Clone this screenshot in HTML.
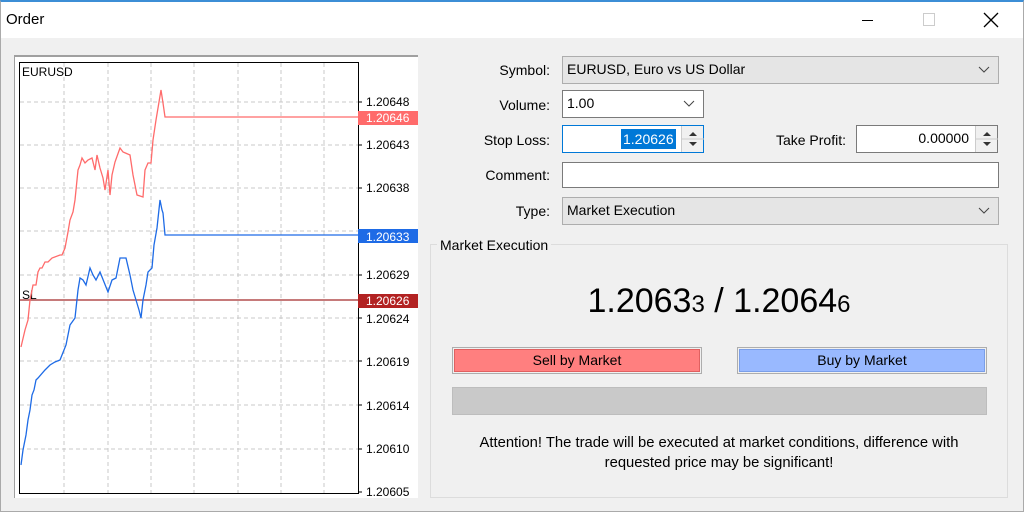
<!DOCTYPE html>
<html><head><meta charset="utf-8"><style>
*{margin:0;padding:0;box-sizing:border-box}
body{width:1024px;height:512px;background:#f0f0f0;font-family:"Liberation Sans",sans-serif;font-size:14px;color:#000;position:relative;overflow:hidden}
.abs{position:absolute}
.lbl{position:absolute;text-align:right;font-size:14px}
.box{position:absolute;border:1px solid #7a7a7a;background:#fff;font-size:14px;padding-left:4px;line-height:25px}
.sel{background:#e5e5e5;border-color:#adadad}
.chev{position:absolute;right:8px;top:0}
</style></head><body>
<div class="abs" style="left:0;top:0;width:1024px;height:512px;border:1px solid #aaa;border-top:2px solid #3c8ed6"></div>
<div class="abs" style="left:1px;top:2px;width:1022px;height:36px;background:#fff"></div>
<div class="abs" style="left:6px;top:11px;font-size:15px">Order</div>
<div class="abs" style="left:862px;top:20px;width:11px;height:1px;background:#000"></div>
<div class="abs" style="left:923px;top:13px;width:12px;height:13px;border:1px solid #ccc"></div>
<svg class="abs" style="left:983px;top:12px" width="16" height="16"><path d="M1 1L15 15M15 1L1 15" stroke="#000" stroke-width="1.3"/></svg>

<div class="abs" style="left:14px;top:55px;width:404px;height:443px;background:#fff;border-top:2px solid #a0a0a0;border-left:1px solid #a0a0a0"></div>
<svg class="abs" style="left:0;top:0" width="420" height="512" font-family="Liberation Sans" font-size="12">
<rect x="19.5" y="62.5" width="339" height="431" fill="#fff" stroke="#000"/>
<g stroke="#c8c8c8" stroke-dasharray="4,3">
<path d="M64 63V493M108 63V493M151 63V493M194 63V493M238 63V493M281 63V493M324 63V493"/>
<path d="M20 102H358M20 145H358M20 188H358M20 231H358M20 275H358M20 318H358M20 361H358M20 405H358M20 449H358"/>
</g>
<g stroke="#000"><path d="M358 102h4M358 145h4M358 188h4M358 275h4M358 318h4M358 361h4M358 405h4M358 449h4M358 492h4"/></g>
<text x="22" y="76">EURUSD</text>
<g fill="#000">
<text x="366" y="106">1.20648</text><text x="366" y="149">1.20643</text><text x="366" y="192">1.20638</text>
<text x="366" y="279">1.20629</text><text x="366" y="323">1.20624</text><text x="366" y="366">1.20619</text>
<text x="366" y="410">1.20614</text><text x="366" y="453">1.20610</text><text x="366" y="496">1.20605</text>
</g>
<path d="M20 300H358" stroke="#a52a2a" stroke-width="1.3"/>
<text x="22" y="299">SL</text>
<polyline fill="none" stroke="#ff6b6b" stroke-width="1.3" points="21,347 25,330 28,320 30,300 33,285 36,285 38,272 40,268 42,268 45,262 48,262 52,258 60,255 62,255 65,248 68,232 70,220 73,212 75,200 78,170 80,165 82,158 85,163 88,160 92,158 95,170 97,155 100,168 103,178 105,190 108,170 110,195 112,175 115,162 120,148 123,152 130,155 133,175 137,195 143,197 145,170 148,163 151,163 153,140 156,120 158,108 161,90 163,103 165,117 358,117"/>
<polyline fill="none" stroke="#1e6be6" stroke-width="1.3" points="21,465 23,450 26,435 28,420 30,410 32,395 34,390 36,380 38,378 45,370 50,365 55,362 60,360 62,355 66,345 68,335 70,325 75,318 78,290 80,278 83,280 86,285 90,268 93,275 96,280 100,272 104,282 108,292 112,280 116,278 120,258 126,258 130,275 133,290 136,300 139,310 141,318 143,300 146,285 148,272 152,268 154,245 157,228 160,200 162,210 163,213 165,235 358,235"/>
<rect x="358" y="111" width="60" height="14" fill="#ff6b6b"/><text x="366" y="122" fill="#fff">1.20646</text>
<rect x="358" y="229" width="60" height="14" fill="#1e6be6"/><text x="366" y="241" fill="#fff">1.20633</text>
<rect x="358" y="294" width="60" height="14" fill="#b22222"/><text x="366" y="305" fill="#fff">1.20626</text>
</svg>

<div class="lbl" style="right:474px;top:62px">Symbol:</div>
<div class="box sel" style="left:562px;top:56px;width:437px;height:28px">EURUSD, Euro vs US Dollar<svg class="chev" style="top:9px" width="12" height="8"><path d="M1 1l5 5 5-5" fill="none" stroke="#444"/></svg></div>
<div class="lbl" style="right:474px;top:97px">Volume:</div>
<div class="box" style="left:562px;top:90px;width:142px;height:28px">1.00<svg class="chev" style="top:9px" width="12" height="8"><path d="M1 1l5 5 5-5" fill="none" stroke="#444"/></svg></div>
<div class="lbl" style="right:474px;top:132px">Stop Loss:</div>
<div class="box" style="left:562px;top:125px;width:142px;height:28px;border-color:#0078d7;padding:0">
 <span class="abs" style="left:58px;top:3px;height:20px;line-height:20px;background:#0078d7;color:#fff;padding:0 2px">1.20626</span>
 <div class="abs" style="right:0;top:0;width:22px;height:26px;border-left:1px solid #ccc;background:#f0f0f0"><svg width="22" height="26"><path d="M7 10l4-4 4 4z M7 16l4 4 4-4z" fill="#333"/><path d="M0 13h22" stroke="#ccc"/></svg></div></div>
<div class="lbl" style="right:178px;top:132px">Take Profit:</div>
<div class="box" style="left:856px;top:125px;width:142px;height:28px;padding:0">
 <span class="abs" style="right:28px;top:0">0.00000</span>
 <div class="abs" style="right:0;top:0;width:22px;height:26px;border-left:1px solid #ccc;background:#f0f0f0"><svg width="22" height="26"><path d="M7 10l4-4 4 4z M7 16l4 4 4-4z" fill="#333"/><path d="M0 13h22" stroke="#ccc"/></svg></div></div>
<div class="lbl" style="right:474px;top:167px">Comment:</div>
<div class="box" style="left:562px;top:162px;width:437px;height:26px"></div>
<div class="lbl" style="right:474px;top:203px">Type:</div>
<div class="box sel" style="left:562px;top:197px;width:437px;height:28px">Market Execution<svg class="chev" style="top:9px" width="12" height="8"><path d="M1 1l5 5 5-5" fill="none" stroke="#444"/></svg></div>

<div class="abs" style="left:430px;top:244px;width:578px;height:254px;border:1px solid #dcdcdc"></div>
<div class="abs" style="left:437px;top:237px;background:#f0f0f0;padding:0 3px">Market Execution</div>
<div class="abs" style="left:430px;top:282px;width:578px;text-align:center;font-size:34px">1.2063<span style="font-size:24px">3</span> / 1.2064<span style="font-size:24px">6</span></div>
<div class="abs" style="left:452px;top:347px;width:250px;height:27px;border:1px solid #adadad;padding:1px"><div style="width:100%;height:100%;background:#ff7f7f;border:1px solid #e06060;text-align:center;line-height:21px">Sell by Market</div></div>
<div class="abs" style="left:737px;top:347px;width:250px;height:27px;border:1px solid #adadad;padding:1px"><div style="width:100%;height:100%;background:#99b9ff;border:1px solid #7a9ee8;text-align:center;line-height:21px">Buy by Market</div></div>
<div class="abs" style="left:452px;top:387px;width:535px;height:28px;background:#c9c9c9;border:1px solid #bdbdbd"></div>
<div class="abs" style="left:430px;top:433px;width:578px;text-align:center;line-height:20px;font-size:14.8px">Attention! The trade will be executed at market conditions, difference with<br>requested price may be significant!</div>
</body></html>
